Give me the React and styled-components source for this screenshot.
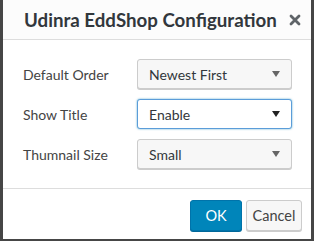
import styled, { createGlobalStyle } from "styled-components";

const GlobalStyle = createGlobalStyle`
    html, body {
        margin: 0;
        padding: 0;
        background: #464646;
    }
    body {
        padding: 0 3px 2px 3px;
        font-family: Lato, "Liberation Sans", Arial, sans-serif;
    }
`

const Field = ({ label, value, focused }) => {
    return (
        <>
            <Label>{label}</Label>
            <Select focused={focused}>
                <span>{value}</span>
                <Arrow focused={focused} />
            </Select>
        </>
    )
}

const App = () => {
    return (
        <>
            <GlobalStyle />
            <Dialog>
                <Header>
                    <Title>Udinra EddShop Configuration</Title>
                    <Close aria-label="Close">
                        <svg width="12" height="12" viewBox="0 0 12 12">
                            <path d="M2 2 L10 10 M10 2 L2 10" stroke="#5f6468" strokeWidth="2.8" strokeLinecap="round" />
                        </svg>
                    </Close>
                </Header>

                <Form>
                    <Field label="Default Order" value="Newest First" />
                    <Field label="Show Title" value="Enable" focused />
                    <Field label="Thumnail Size" value="Small" />
                </Form>

                <Footer>
                    <Button primary>OK</Button>
                    <Button>Cancel</Button>
                </Footer>
            </Dialog>
        </>
    )
}

const Dialog = styled.div`
    width: 308px;
    height: 239px;
    background: #fff;
    display: flex;
    flex-direction: column;
    box-sizing: border-box;
`

const Header = styled.div`
    height: 40px;
    box-sizing: border-box;
    border-bottom: 1px solid #dddddd;
    background: #fcfcfc;
    display: flex;
    align-items: center;
    justify-content: space-between;
    padding: 0 10px 0 21px;
`

const Title = styled.div`
    font-size: 18.7px;
    font-weight: 700;
    color: #32373c;
    white-space: nowrap;
`

const Close = styled.div`
    display: flex;
    align-items: center;
    height: 12px;
`

const Form = styled.div`
    display: grid;
    grid-template-columns: 114px 155px;
    grid-auto-rows: 30px;
    row-gap: 10px;
    align-items: center;
    padding: 19px 19px 19px 20px;
    border-bottom: 1px solid #dddddd;
`

const Label = styled.div`
    font-size: 14px;
    color: #444;
`

const Select = styled.div`
    height: 30px;
    box-sizing: border-box;
    border: 1px solid ${(p) => (p.focused ? "#5b9dd9" : "#cccccc")};
    border-radius: 3px;
    background: ${(p) => (p.focused ? "#fff" : "#f7f7f7")};
    box-shadow: ${(p) => (p.focused ? "0 0 2px rgba(30,140,190,.8)" : "0 1px 0 #cccccc")};
    display: flex;
    align-items: center;
    justify-content: space-between;
    padding: 0 11px 0 11px;
    font-size: 14px;
    color: #32373c;
`

const Arrow = styled.span`
    width: 0;
    height: 0;
    border-left: 4px solid transparent;
    border-right: 4px solid transparent;
    border-top: 6px solid ${(p) => (p.focused ? "#222" : "#666")};
`

const Footer = styled.div`
    display: flex;
    justify-content: flex-end;
    gap: 4px;
    padding: 11px 9px 8px 0;
`

const Button = styled.button`
    height: 31px;
    width: ${(p) => (p.primary ? "52px" : "56px")};
    box-sizing: border-box;
    border-radius: 3px;
    font-family: Lato, "Liberation Sans", Arial, sans-serif;
    font-size: 14.5px;
    padding: 0;
    border: 1px solid ${(p) => (p.primary ? "#0073aa" : "#cccccc")};
    background: ${(p) => (p.primary ? "#0085ba" : "#f7f7f7")};
    color: ${(p) => (p.primary ? "#fff" : "#444")};
    box-shadow: ${(p) => (p.primary ? "0 1px 0 #006799" : "0 1px 0 #cccccc")};
`

export default App;
